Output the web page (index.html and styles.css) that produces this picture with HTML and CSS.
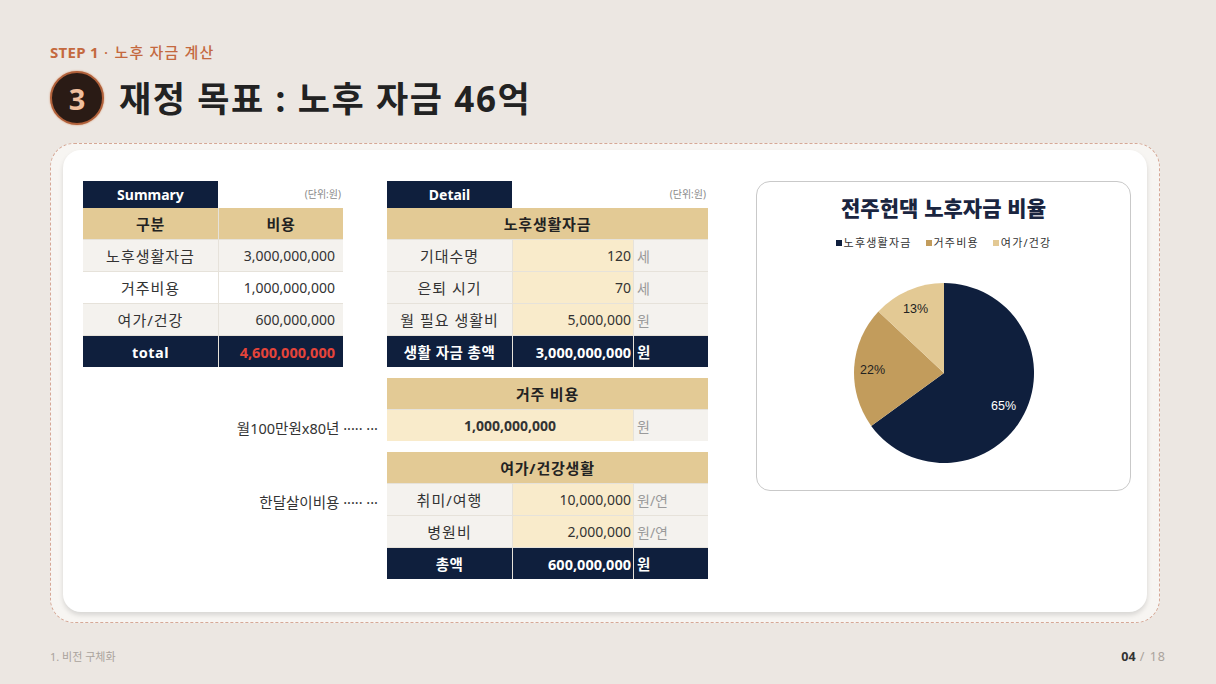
FILE: index.html
```html
<!DOCTYPE html>
<html lang="ko">
<head>
<meta charset="utf-8">
<link rel="stylesheet" href="styles.css">
</head>
<body>
<div class="page">
  <header class="header">
    <div class="step"><b>STEP 1</b> · 노후 자금 계산</div>
    <div class="title-row">
      <div class="num">3</div>
      <h1 class="title">재정 목표 : 노후 자금 46억</h1>
    </div>
  </header>

  <section class="frame">
    <div class="card">
      <div class="tables">
        <!-- Summary -->
        <div class="summary">
          <div class="thead">
            <div class="tag tag-sum">Summary</div>
            <div class="unit-note">(단위:원)</div>
          </div>
          <div class="grid grid-sum">
            <div class="c head">구분</div>
            <div class="c head">비용</div>
            <div class="c lbl alt">노후생활자금</div>
            <div class="c num-r alt">3,000,000,000</div>
            <div class="c lbl">거주비용</div>
            <div class="c num-r">1,000,000,000</div>
            <div class="c lbl alt">여가/건강</div>
            <div class="c num-r alt">600,000,000</div>
            <div class="c navy">total</div>
            <div class="c navy num-r red">4,600,000,000</div>
          </div>
        </div>

        <!-- Detail -->
        <div class="detail">
          <div class="thead">
            <div class="tag tag-det">Detail</div>
            <div class="unit-note">(단위:원)</div>
          </div>
          <div class="grid grid-det">
            <div class="c head span3">노후생활자금</div>
            <div class="c lbl">기대수명</div>
            <div class="c val">120</div>
            <div class="c unit">세</div>
            <div class="c lbl">은퇴 시기</div>
            <div class="c val">70</div>
            <div class="c unit">세</div>
            <div class="c lbl">월 필요 생활비</div>
            <div class="c val">5,000,000</div>
            <div class="c unit">원</div>
            <div class="c navy">생활 자금 총액</div>
            <div class="c navy val-n">3,000,000,000</div>
            <div class="c navy unit-n">원</div>
          </div>
        </div>

        <div class="note">월100만원x80년 ····· ···</div>
        <div class="grid grid-det">
          <div class="c head span3">거주 비용</div>
          <div class="c val center span2">1,000,000,000</div>
          <div class="c unit">원</div>
        </div>

        <div class="note">한달살이비용 ····· ···</div>
        <div class="grid grid-det">
          <div class="c head span3">여가/건강생활</div>
          <div class="c lbl">취미/여행</div>
          <div class="c val">10,000,000</div>
          <div class="c unit">원/연</div>
          <div class="c lbl">병원비</div>
          <div class="c val">2,000,000</div>
          <div class="c unit">원/연</div>
          <div class="c navy">총액</div>
          <div class="c navy val-n">600,000,000</div>
          <div class="c navy unit-n">원</div>
        </div>
      </div>

      <div class="chart">
        <h2 class="chart-title">전주헌댁 노후자금 비율</h2>
        <div class="legend">
          <span class="lg"><i class="sq sq-navy"></i>노후생활자금</span>
          <span class="lg"><i class="sq sq-tan"></i>거주비용</span>
          <span class="lg"><i class="sq sq-light"></i>여가/건강</span>
        </div>
        <svg class="pie" width="182" height="182" viewBox="0 0 182 182">
          <path d="M91 91 L91 1 A90 90 0 1 1 18.2 143.9 Z" fill="#0f1f3d"/>
          <path d="M91 91 L18.2 143.9 A90 90 0 0 1 25.4 29.4 Z" fill="#c29c5c"/>
          <path d="M91 91 L25.4 29.4 A90 90 0 0 1 91 1 Z" fill="#e3c994"/>
          <text x="138" y="128" class="pl pl-w">65%</text>
          <text x="7" y="92" class="pl">22%</text>
          <text x="50" y="31" class="pl">13%</text>
        </svg>
      </div>
    </div>
  </section>

  <footer class="footer">
    <span class="foot-l">1. 비전 구체화</span>
    <span class="foot-r"><b>04</b> / 18</span>
  </footer>
</div>
</body>
</html>
```

FILE: styles.css
```css
* { box-sizing: border-box; }
html, body { margin: 0; padding: 0; }
body {
  width: 1216px;
  height: 684px;
  overflow: hidden;
  background: #ece7e2;
  font-family: "Noto Sans", "Noto Sans CJK KR", sans-serif;
  color: #333;
}
.page { width: 1216px; height: 684px; }

.header { padding: 43px 0 0 50px; }
.step {
  font-size: 15px;
  line-height: 18px;
  color: #c4693f;
  font-weight: 500;
  letter-spacing: 1.2px;
}
.step b { font-weight: 700; letter-spacing: 0.3px; }
.title-row {
  display: flex;
  align-items: center;
  gap: 15px;
  margin-top: 10px;
  height: 54px;
}
.num {
  width: 54px;
  height: 54px;
  border-radius: 50%;
  background: #2a1b15;
  border: 2px solid #b0603a;
  box-shadow: 0 0 2px #d08a60;
  color: #f0bf9e;
  font-size: 29px;
  font-weight: 700;
  display: flex;
  align-items: center;
  justify-content: center;
  line-height: 1;
}
.title {
  margin: 0;
  font-family: "Noto Sans", "Noto Sans CJK KR", sans-serif;
  font-size: 35px;
  font-weight: 700;
  color: #222;
  letter-spacing: 1.6px;
  line-height: 1;
}

.frame {
  margin: 18px 0 0 50px;
  width: 1110px;
  height: 480px;
  border: 1px dashed #d6a896;
  border-radius: 24px;
  padding: 6px 12px 10px 12px;
  background: #f7f5f2;
}
.card {
  height: 100%;
  background: #fff;
  border-radius: 18px;
  box-shadow: 0 3px 5px rgba(0,0,0,0.13);
  padding: 31px 16px 0 20px;
  display: flex;
  align-items: flex-start;
}

.tables {
  display: grid;
  grid-template-columns: 295px 321px;
  column-gap: 9px;
  row-gap: 11px;
}
.summary { width: 260px; }
.thead {
  display: flex;
  height: 27px;
}
.tag {
  background: #0f1f3d;
  color: #fff;
  font-weight: 700;
  font-size: 14px;
  display: flex;
  align-items: center;
  justify-content: center;
}
.tag-sum { width: 135px; }
.tag-det { width: 125px; }
.unit-note {
  flex: 1;
  text-align: right;
  font-size: 10px;
  color: #8a8a8a;
  line-height: 27px;
  padding-right: 2px;
}

.grid {
  display: grid;
  gap: 1px;
  background: #e6e2da;
  grid-auto-rows: 31px;
}
.grid-sum { grid-template-columns: 135px 124px; }
.grid-det { grid-template-columns: 125px 120px 74px; }

.c {
  display: flex;
  align-items: center;
  justify-content: center;
  font-size: 14px;
  color: #333;
  background: #fff;
  white-space: nowrap;
}
.head {
  background: #e3ca95;
  font-weight: 700;
  font-size: 15px;
  letter-spacing: 0.8px;
  color: #222;
}
.span3 { grid-column: 1 / -1; }
.span2 { grid-column: span 2; }
.lbl {
  background: #f4f2ee;
  color: #333;
  font-size: 15px;
  letter-spacing: 1px;
}
.grid-sum .lbl { background: #fff; }
.grid-sum .alt { background: #f4f2ee; }
.num-r { justify-content: flex-end; padding-right: 8px; }
.val {
  background: #f9ebcb;
  justify-content: flex-end;
  padding-right: 2px;
}
.val.center { justify-content: center; font-weight: 700; padding-right: 0; }
.unit {
  background: #f4f2ee;
  color: #9a9a9a;
  justify-content: flex-start;
  padding-left: 3px;
}
.navy {
  background: #0f1f3d;
  color: #fff;
  font-weight: 700;
  font-size: 14.5px;
  letter-spacing: 0.5px;
}
.navy.num-r, .val-n { letter-spacing: 0; }
.red { color: #e5443a; }
.val-n { justify-content: flex-end; padding-right: 2px; font-size: 14.5px; }
.unit-n { justify-content: flex-start; padding-left: 3px; }

.note {
  justify-self: end;
  font-size: 14.5px;
  color: #333;
  padding-top: 41px;
  line-height: 18px;
  white-space: nowrap;
}

.chart {
  margin-left: 48px;
  width: 375px;
  height: 310px;
  border: 1px solid #c9c9c9;
  border-radius: 14px;
  display: flex;
  flex-direction: column;
  align-items: center;
}
.chart-title {
  margin: 11px 0 0;
  font-family: "Noto Sans CJK KR", sans-serif;
  font-size: 21px;
  font-weight: 800;
  color: #1a2540;
  line-height: 28px;
}
.legend {
  margin-top: 14px;
  display: flex;
  gap: 14px;
  font-size: 11px;
  letter-spacing: 1.2px;
  color: #333;
  line-height: 16px;
}
.lg { display: flex; align-items: center; }
.sq { width: 6px; height: 6px; display: inline-block; margin-right: 2px; }
.sq-navy { background: #0f1f3d; }
.sq-tan { background: #c29c5c; }
.sq-light { background: #e3c994; }
.pie { margin-top: 31px; margin-left: 1px; }
.pl {
  font-family: "Liberation Sans", Arial, sans-serif;
  font-size: 12.5px;
  fill: #222;
}
.pl-w { fill: #fff; }

.footer {
  margin-top: 27px;
  display: flex;
  justify-content: space-between;
  align-items: baseline;
  padding: 0 50px;
  font-size: 11px;
  line-height: 14px;
}
.foot-l { color: #aaa39c; }
.foot-r { color: #aaa39c; font-size: 12.5px; letter-spacing: 1px; }
.foot-r b { color: #333; font-weight: 700; letter-spacing: 0; }
```
